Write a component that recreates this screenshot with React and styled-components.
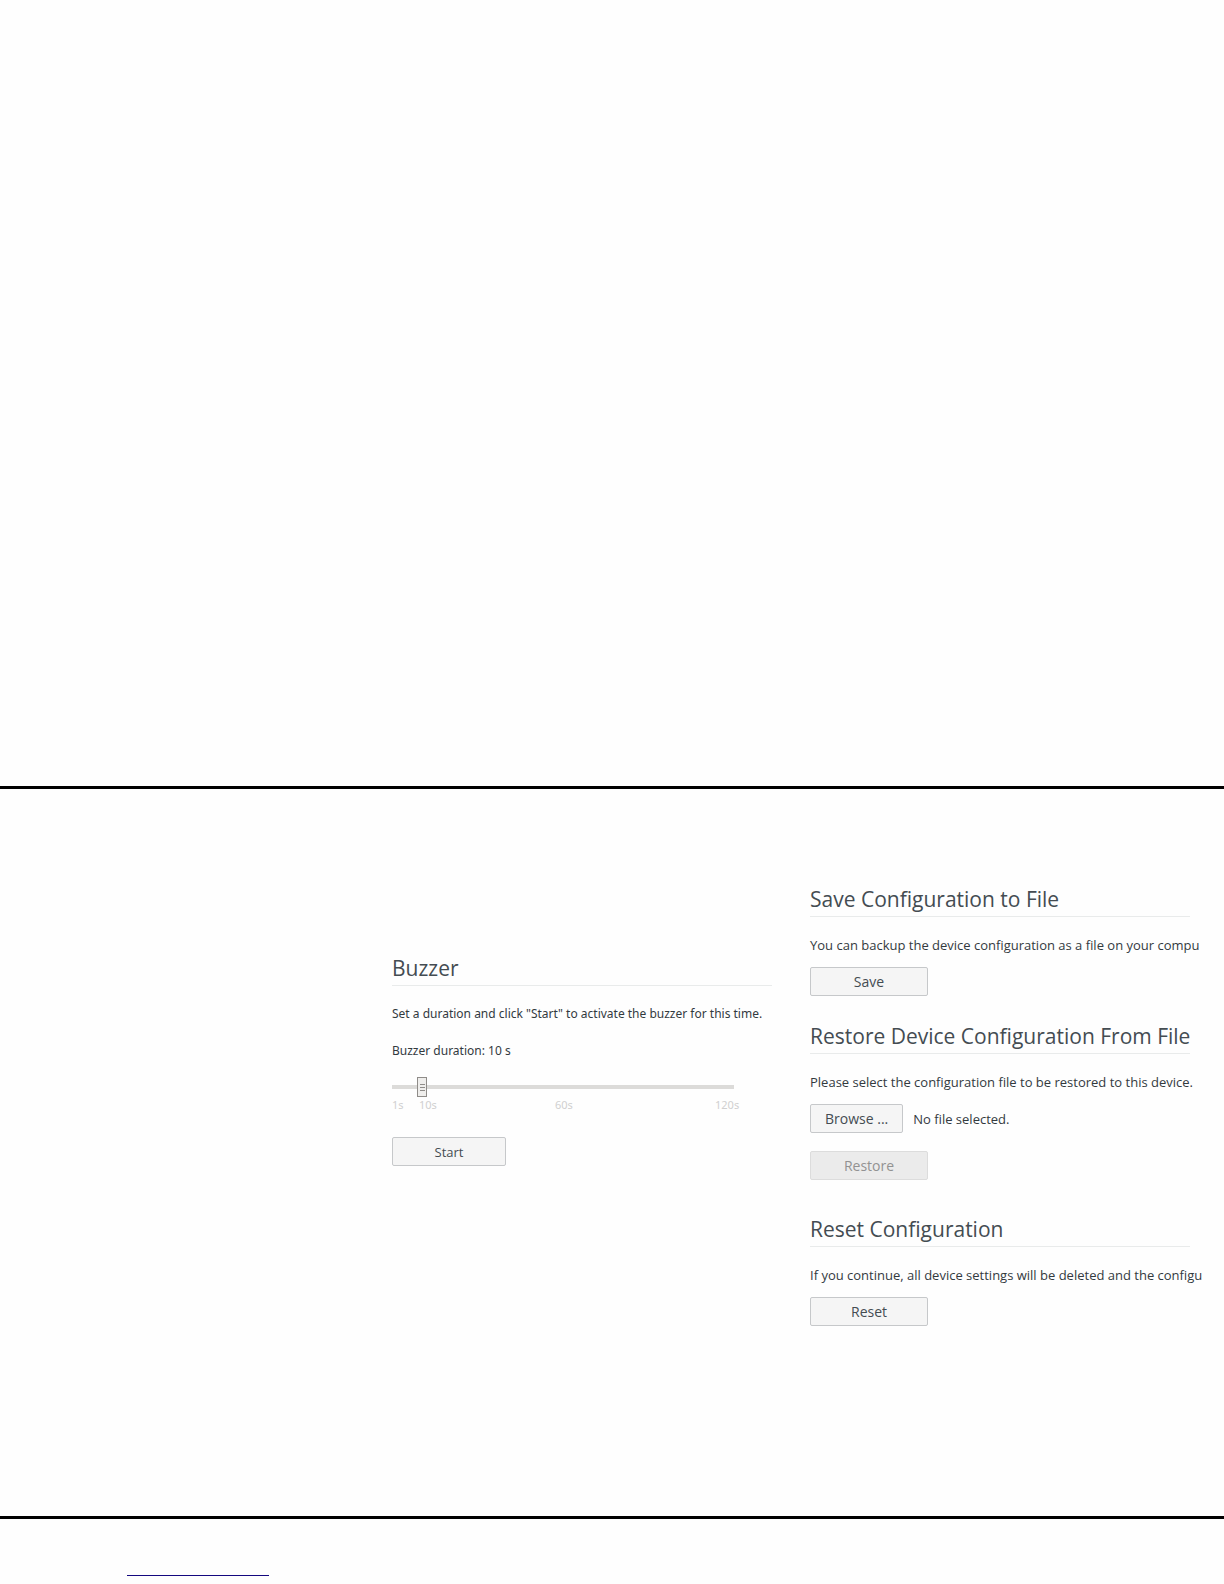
import React, { useRef, useState } from 'react';
import styled, { createGlobalStyle } from 'styled-components';

const GlobalStyle = createGlobalStyle`
    * {
        box-sizing: border-box;
    }

    body {
        margin: 0;
        background-color: #fefefe;
        color: #333a3e;
        font-family: "Open Sans", "Noto Sans", sans-serif;
        font-size: 13px;
        line-height: 20px;
    }
`;

const StyledPage = styled.div`
    padding-top: 786px;
`;

const StyledMain = styled.main`
    display: grid;
    grid-template-columns: 380px 380px;
    justify-content: end;
    gap: 38px;
    padding: 97px 34px 189px 34px;
    border-top: 3px solid #000;
    border-bottom: 3px solid #000;
`;

const StyledColumn = styled.div`
    display: flex;
    flex-direction: column;
    min-width: 0;
    padding-top: ${props => props.$offset || 0}px;
    font-family: ${props => props.$compact ? '"Noto Sans", sans-serif' : 'inherit'};
    font-size: ${props => props.$compact ? 12 : 13}px;
`;

const StyledSection = styled.section`
    margin-bottom: ${props => props.$gap || 0}px;
`;

const StyledTitle = styled.h2`
    margin: 0 0 18px 0;
    padding-bottom: 4px;
    border-bottom: 1px solid #e9ebeb;
    color: #444c52;
    font-family: "Open Sans", sans-serif;
    font-size: 21px;
    font-weight: 400;
    line-height: 26px;
    white-space: nowrap;
`;

const StyledText = styled.p`
    margin: 0 0 12px 0;
    white-space: nowrap;
`;

const StyledLabel = styled.label`
    display: block;
    margin: 17px 0 16px 0;
`;

const StyledSlider = styled.input`
    display: block;
    appearance: none;
    width: 342px;
    height: 20px;
    margin: 0;
    background: linear-gradient(#dcdbd9, #dcdbd9) center / 100% 4px no-repeat;

    &::-webkit-slider-thumb {
        appearance: none;
        width: 10px;
        height: 20px;
        border: 1px solid #8f8c89;
        background:
            linear-gradient(#8f8c89, #8f8c89) 2px 6px / 5px 1px no-repeat,
            linear-gradient(#8f8c89, #8f8c89) 2px 9px / 5px 1px no-repeat,
            linear-gradient(#8f8c89, #8f8c89) 2px 12px / 5px 1px no-repeat,
            #efeeec;
    }
`;

const StyledScale = styled.div`
    display: grid;
    grid-template-columns: 27px 136px 160px auto;
    margin-bottom: 24px;
    color: #d0d0d0;
    font-size: 11px;
    line-height: 16px;
`;

const StyledButton = styled.button`
    height: 29px;
    min-width: ${props => props.$width || 0}px;
    padding: 0 14px;
    border: 1px solid #c6c8ca;
    border-radius: 2px;
    background-color: #f5f5f5;
    color: #444c52;
    font-family: "Open Sans", sans-serif;
    font-size: ${props => props.$small ? 13 : 14}px;
    line-height: 20px;

    &:disabled {
        border-color: #dcdcdc;
        background-color: #ebebeb;
        color: #929292;
    }
`;

const StyledFileRow = styled.div`
    display: flex;
    align-items: center;
    gap: 10px;
    margin-bottom: 18px;
`;

const StyledFooter = styled.footer`
    padding: 56px 127px 8px 127px;
`;

const StyledRule = styled.div`
    width: 142px;
    height: 1px;
    background-color: #14087f;
`;

function Buzzer() {
    const [duration, setDuration] = useState(10);

    return(
        <StyledSection>
            <StyledTitle>Buzzer</StyledTitle>
            <StyledText>Set a duration and click "Start" to activate the buzzer for this time.</StyledText>
            <StyledLabel htmlFor="duration">Buzzer duration: {duration} s</StyledLabel>
            <StyledSlider
                id="duration"
                type="range"
                min="1"
                max="120"
                value={duration}
                onChange={e => setDuration(Number(e.target.value))}
            />
            <StyledScale>
                <span>1s</span>
                <span>10s</span>
                <span>60s</span>
                <span>120s</span>
            </StyledScale>
            <StyledButton type="button" $width={114} $small>Start</StyledButton>
        </StyledSection>
    )
}

function RestoreConfig() {
    const fileInput = useRef(null);
    const [fileName, setFileName] = useState('');

    return(
        <StyledSection $gap={36}>
            <StyledTitle>Restore Device Configuration From File</StyledTitle>
            <StyledText>Please select the configuration file to be restored to this device.</StyledText>
            <StyledFileRow>
                <StyledButton type="button" onClick={() => fileInput.current.click()}>Browse ...</StyledButton>
                <span>{fileName || 'No file selected.'}</span>
                <input
                    ref={fileInput}
                    type="file"
                    hidden
                    aria-label="Configuration file"
                    onChange={e => setFileName(e.target.files[0] ? e.target.files[0].name : '')}
                />
            </StyledFileRow>
            <StyledButton type="button" $width={118} disabled={!fileName}>Restore</StyledButton>
        </StyledSection>
    )
}

function App() {
    return(
        <StyledPage>
            <GlobalStyle />
            <StyledMain>
                <StyledColumn $offset={69} $compact>
                    <Buzzer />
                </StyledColumn>
                <StyledColumn>
                    <StyledSection $gap={27}>
                        <StyledTitle>Save Configuration to File</StyledTitle>
                        <StyledText>You can backup the device configuration as a file on your compu</StyledText>
                        <StyledButton type="button" $width={118}>Save</StyledButton>
                    </StyledSection>
                    <RestoreConfig />
                    <StyledSection $gap={1}>
                        <StyledTitle>Reset Configuration</StyledTitle>
                        <StyledText>If you continue, all device settings will be deleted and the configu</StyledText>
                        <StyledButton type="button" $width={118}>Reset</StyledButton>
                    </StyledSection>
                </StyledColumn>
            </StyledMain>
            <StyledFooter>
                <StyledRule />
            </StyledFooter>
        </StyledPage>
    )
}

export default App;
